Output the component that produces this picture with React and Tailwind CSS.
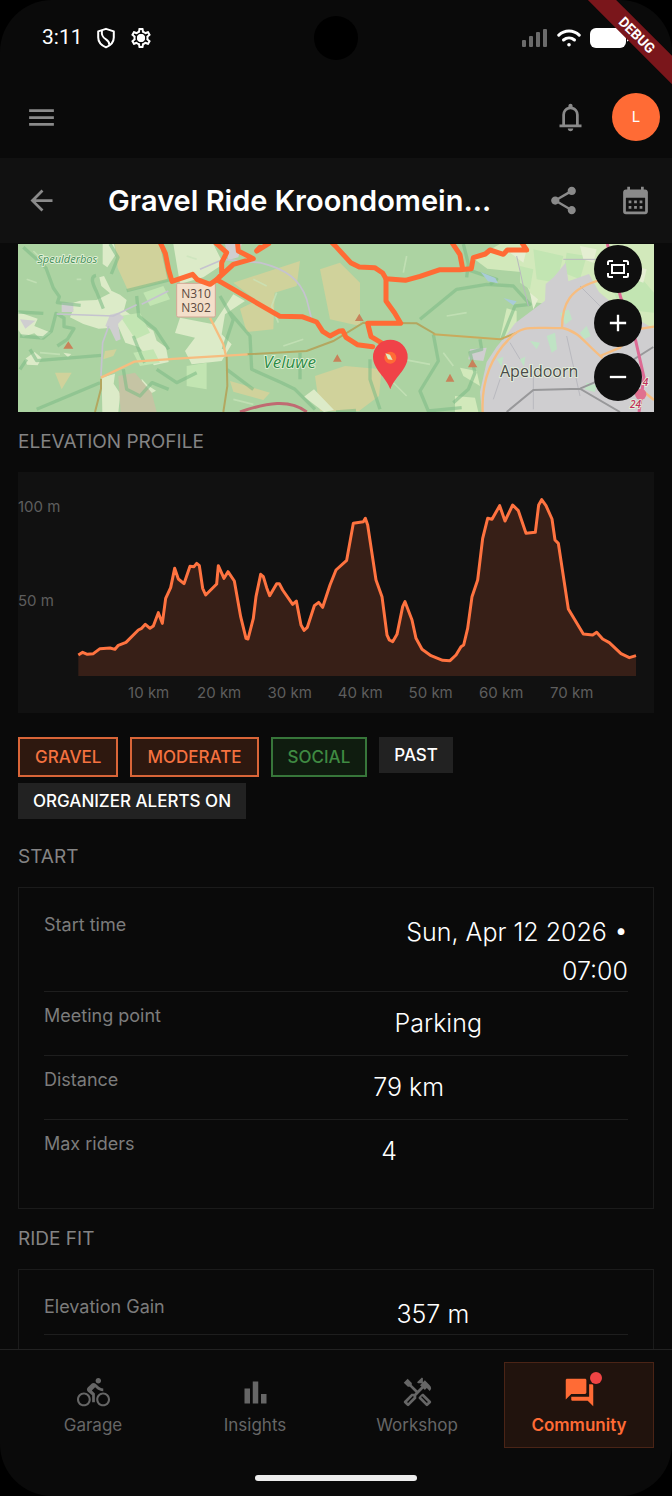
import {
  MdAdd,
  MdArrowBack,
  MdBarChart,
  MdCalendarMonth,
  MdDirectionsBike,
  MdForum,
  MdMenu,
  MdOutlineHandyman,
  MdOutlineSettings,
  MdRemove,
  MdShare,
} from 'react-icons/md';

const PROFILE = [
  [235, 570], [248, 562], [262, 568], [280, 566], [300, 551], [330, 549], [345, 553], [355, 541], [378, 532],
  [415, 495], [425, 490], [436, 478], [450, 490], [460, 483], [475, 443], [487, 475], [497, 400], [512, 368],
  [524, 310], [535, 342], [552, 356], [570, 304], [582, 305], [590, 295], [598, 302], [608, 370], [617, 390],
  [650, 357], [655, 302], [672, 340], [684, 320], [703, 348], [722, 455], [738, 520], [744, 522], [760, 460],
  [768, 395], [782, 328], [790, 335], [800, 368], [809, 392], [830, 356], [838, 356], [848, 375], [878, 418],
  [889, 408], [903, 480], [912, 496], [922, 487], [943, 422], [956, 412], [968, 427], [990, 360], [1008, 315],
  [1040, 286], [1060, 175], [1090, 170], [1096, 160], [1103, 180], [1128, 345], [1146, 395], [1161, 510],
  [1168, 525], [1178, 530], [1191, 508], [1208, 425], [1215, 410], [1236, 465], [1248, 520], [1266, 553],
  [1293, 572], [1328, 586], [1350, 587], [1368, 570], [1383, 545], [1391, 540], [1403, 490], [1416, 395],
  [1433, 345], [1448, 220], [1463, 160], [1476, 163], [1499, 122], [1515, 168], [1538, 120], [1555, 137],
  [1578, 205], [1606, 202], [1616, 120], [1625, 104], [1638, 122], [1656, 162], [1665, 225], [1675, 235],
  [1705, 432], [1750, 507], [1778, 510], [1790, 502], [1808, 522], [1828, 533], [1863, 566], [1888, 578], [1908, 572],
];

const START_ROWS = [
  { label: 'Start time', value: 'Sun, Apr 12 2026 • 07:00' },
  { label: 'Meeting point', value: 'Parking' },
  { label: 'Distance', value: '79 km' },
  { label: 'Max riders', value: '4' },
];

const FIT_ROWS = [{ label: 'Elevation Gain', value: '357 m' }];

const TABS = [
  { label: 'Garage', icon: MdDirectionsBike },
  { label: 'Insights', icon: MdBarChart },
  { label: 'Workshop', icon: MdOutlineHandyman },
  { label: 'Community', icon: MdForum, active: true },
];

const BellIcon = ({ className }) => (
  <svg viewBox="0 0 24 24" className={className} fill="currentColor">
    <path d="M4 19v-2h2v-7q0-2.075 1.250-3.687T10.500 4.200v-.7q0-.625.438-1.062T12 2t1.063.438T13.500 3.500v.7q2 .5 3.250 2.113T18 10v7h2v2zm8 3q-.825 0-1.412-.587T10 20h4q0 .825-.587 1.413T12 22m-4-5h8v-7q0-1.650-1.175-2.825T12 6 9.175 7.175 8 10z" />
  </svg>
);

const FitIcon = ({ className }) => (
  <svg viewBox="0 0 24 20" className={className} fill="none" stroke="currentColor" strokeWidth="2">
    <path d="M2 6V3.500Q2 2 3.500 2H7M17 2h3.500Q22 2 22 3.500V6M22 14v2.500Q22 18 20.500 18H17M7 18H3.500Q2 18 2 16.500V14" />
    <rect x="6" y="6" width="12" height="8" />
  </svg>
);

const StatusBar = () => (
  <div className="relative flex h-19 items-center justify-between px-[42px]">
    <div className="flex items-center gap-3 text-white">
      <span className="font-[Roboto] text-[21px]">3:11</span>
      <svg viewBox="0 0 24 24" className="size-[22px]" fill="none" stroke="currentColor" strokeWidth="2.2" strokeLinejoin="round">
        <path d="M12 2 20.500 4.800v6.700c0 4.700-3.200 8.500-8.500 10.700-5.300-2.200-8.500-6-8.500-10.700V4.800z" />
        <path d="M7.500 4c-.5 5.500 1 7.500 4.500 9.500 2.500 1.500 3.500 3 3.800 6" />
      </svg>
      <div className="relative flex items-center justify-center">
        <MdOutlineSettings className="size-6" />
        <span className="absolute size-2 rounded-full bg-white" />
      </div>
    </div>
    <div className="absolute left-1/2 top-4 size-11 -translate-x-1/2 rounded-full bg-black" />
    <div className="flex items-center gap-[9px]">
      <svg viewBox="0 0 26 18" className="h-[18px] w-[26px]" fill="#6b6b6b">
        <rect x="0" y="11" width="4" height="7" rx="1" />
        <rect x="7" y="7" width="4" height="11" rx="1" />
        <rect x="14" y="3" width="4" height="15" rx="1" />
        <rect x="21" y="0" width="4" height="18" rx="1" />
      </svg>
      <svg viewBox="0 0 24 18" className="h-[18px] w-6" fill="none" stroke="#fff" strokeWidth="3" strokeLinecap="round">
        <path d="M1.800 6.200c5.800-5.600 14.600-5.600 20.400 0" />
        <path d="M6.500 11c3.200-2.800 7.800-2.800 11 0" />
        <circle cx="12" cy="15.800" r="1.800" fill="#fff" stroke="none" />
      </svg>
      <svg viewBox="0 0 40 20" className="h-5 w-10" fill="#fff">
        <rect width="36" height="20" rx="6" />
        <path d="M37 6.500c2 .5 3 1.800 3 3.500s-1 3-3 3.500z" />
      </svg>
    </div>
  </div>
);

const RideMap = () => (
  <div className="relative h-[168px] overflow-hidden">
    <svg viewBox="54 24 1908 504" preserveAspectRatio="xMidYMid slice" className="block h-full w-full" fill="none" aria-hidden="true">
      <rect x="54" y="24" width="1908" height="504" fill="#acd3a2" />
      {/* heath */}
      <g fill="#d0d29b">
        <path d="M345 24h132l38 104-130 38-32-70z" />
        <path d="M700 140 900 75l-10 75-66 20-4 110-80 8-20-70 50-24z" />
        <path d="M960 100l60-20 60 60v130l-90-20z" />
        <path d="M945 420l90-30 110 10-8 80-60 45H960z" />
        <path d="M690 435l120 35-20 22-90-25zM165 410h50l-30 50zM315 345l35-5-10 20-30 10z" />
      </g>
      {/* fields */}
      <g fill="#dcebc8">
        <path d="M298 124l14-4 22 44 26 12 20 16-8 30 34 24 30 24 24 14 10 30 28 20 8 44-44 10-44-54-42-14-20-46-60 4-46-14-40-20 10-24-20-14 40-12 50-2 40-20-26-22z" />
        <path d="M540 245l100 20 60-90 35 20-60 40-10 60 30 30-30 50-90 10-20-40 30-40-60-14z" />
        <path d="M55 228l58 20-10 22 50 20-30 20-20-18-34 10-14-20zM74 370l30-22 21 18-12 22-32-2z" />
        <path d="M305 425l40-12-4 30 20 30-6 55h-48zM425 428l18 20 25 16-14 8-28-10z" />
        <path d="M520 24h120l30 60-60 40-70 20zM308 24h34l6 30-26 40-14-10z" />
        <path d="M912 482l30-22 60 62-30 6zM190 350l24 4-10 10z" />
      </g>
      <g fill="#d2e9bb">
        <path d="M1500 24h462v504h-100l-80-300-180-30-40-90-100-10-40-30z" />
        <path d="M1550 225l-30-8-20 90 50-10zM1365 480l60 5 10 43h-70zM1380 395l50 10 10 45-50-30z" />
      </g>
      <g fill="#c2e5b2">
        <path d="M360 240l60-10 30 60-44 20zM560 390l60-10v80l-60-10zM1600 40l90 20-20 80-60-10zM1830 140l80-30 52 60v60l-100-10zM1700 50l60 10-20 70-50-20z" />
        <path d="M430 170l60-20 20 40-60 20zM400 350l60-10 20 40-60 10zM1560 90l40 10-10 60-30-20zM1830 40l90 20-30 50z" />
      </g>
      <g fill="#e5eed2">
        <path d="M1530 50l50-10-10 40zM1740 30l50 10-10 40-30-10zM1900 90l40 10-10 40-30-10zM1940 270l22 10v40l-22-10zM1590 170l24 20-14 30z" />
      </g>
      <path d="M355 420l50-10 50 60 15 58h-108z" fill="#c5c4a4" />
      {/* towns */}
      <g fill="#cfced0">
        <path d="M1545 262l50-38 40-30 2-50 24-20 36-44 8 56 62-22 30 54 60 50 105 60v250h-516l-6-60 20-90 30-46 30-36z" />
        <path d="M1410 340l50-5-10 40-45-5zM185 200h35v28h-35zM330 236l24-6 18 14-18 20 8 46-14 6-18-38-14-8zM675 24h50l-10 40-30 8zM60 250l46 4-30 24z" />
      </g>
      <g fill="#bfe3c4">
        <path d="M1640 300l25-10 6 50-16 10zM1680 232l26-12 10 30-20 16zM1740 290l20-20 12 30-20 10zM1590 315l30 5-10 20zM1490 370l20-8-5 30zM1760 440l30 8-6 20-30-8zM1560 370l16-8-4 30z" />
      </g>
      {/* forest edges */}
      <g stroke="#7fbd87" strokeWidth="10" strokeLinejoin="round" strokeOpacity=".6">
        <path d="M70 34l40 36 28 26 22 60 18 26-6 18 70 8M330 24l24 40-20 50M380 164l128-32-20-90M288 118c-20 4-8 30 2 50l20 50M410 180l6 60 50 40 40 60" />
        <path d="M55 228l75 4M60 300l70 6 24-20 14-54 24 14 0 26 30 6-20 32-30 20M90 340l20 34 194-16M60 400l20-30M110 520l190-80M400 300l24 60 10 20" />
        <path d="M660 180l40 70-30 90M690 230l60 70 5 100 90 40 40 20 60 60M370 400l10 60 40 20 36-40 50 20M470 400l60 40 60-30M900 350v80M680 400l80 60" />
        <path d="M1260 250l110-90 90-15 80 5 50 55-45 5-20 50-20 50M1300 295l15 80-55 90 25 60 100-10M1440 310l5 30-35 10 15 60-20 50-45 40" />
        <path d="M1110 370v60l30 90M1008 528l60-5M1390 24l15 60-5 40M1400 100l90 30-20 15" />
      </g>
      <g stroke="#c9e4bb" strokeWidth="5" strokeOpacity=".7">
        <path d="M100 45l20 20M230 130h14M80 130l30 10M560 60l30 10M830 170l-15 40 20 50M850 330l60-20M1220 60l-10 50M1340 240l60-10M1210 370l80 15M1330 350l30 40M1160 420l60 60M760 130l40 20M700 490l60 15M120 350l60 5" />
      </g>
      <g stroke="#c5c3cf" strokeWidth="5">
        <path d="M170 234l170 6 70-34M425 205l80-40M600 100l70-30 110 10c80 20 120 50 140 110l15 60M326 270l-18 50-5 100" />
        <path d="M1550 60l20 90 15 60M1690 70h120M1530 320l30 50M1600 420v100M1700 300l40 180M1500 430l-20 60M1740 150l60 60" stroke="#b9b9bf" strokeWidth="3" />
      </g>
      <path d="M1442 108l44 18 8 16-30-6zM1510 186l40 10-10 12z" fill="#a9cbd8" />
      {/* secondary roads */}
      <g stroke="#b3a760" strokeWidth="6">
        <path d="M285 528l18-70v-30M680 360l2 90-12 78M740 355l180-10 80-30 90-55 160 2 55 32" />
        <path d="M1300 295l200 15 50-20" stroke="#c9aa5c" />
      </g>
      <g stroke="#f6bd80" strokeWidth="7">
        <path d="M303 425l100-48 140-10 200-12M630 245l40 80 8 35" />
        <path d="M1448 528c-4-90 20-160 80-220 40-44 70-30 160-32 50 10 70 50 120 90M1686 276c0-70 20-120 120-145M1800 360l60-25 50-55 52-8M1925 462l37 30" />
      </g>
      <path d="M720 528c80-28 150-40 200 0" stroke="#c06a72" strokeWidth="9" />
      <path d="M1520 528l80-66 140-4 120 70M1740 458l70-30 150-95" stroke="#98989a" strokeWidth="6" />
      <path d="M1822 24l40 160 45 130 25 110-15 104" stroke="#dd6a94" strokeWidth="9" />
      <circle cx="1922" cy="475" r="17" fill="#e0708f" />

      <g fill="#c8825a">
        <path d="M205 316l15 22h-30zM1078 233l13 22h-26zM1012 355l13 22h-26zM1350 413l13 24h-26zM1417 370l15 24h-28z" />
      </g>

      <g fontFamily="'Open Sans', 'Noto Sans', sans-serif" stroke="#e6f2dc" strokeWidth="5" paintOrder="stroke">
        <text x="112" y="80" fontSize="33" fontWeight="500" fontStyle="italic" fill="#3f8e55">Speulderbos</text>
        <text x="790" y="396" fontSize="51" fontWeight="500" fontStyle="italic" fill="#2d8c46">Veluwe</text>
        <text x="1500" y="423" fontSize="48" fontWeight="500" fill="#4a4a4a">Apeldoorn</text>
        <text x="1890" y="516" fontSize="30" fontWeight="600" fontStyle="italic" fill="#c0305c">24</text>
        <text x="1928" y="450" fontSize="30" fontWeight="600" fontStyle="italic" fill="#c0305c">4</text>
      </g>
      <rect x="530" y="142" width="116" height="101" rx="4" fill="#f3dfca" stroke="#d3a795" strokeWidth="3" />
      <g fontFamily="'Open Sans', 'Noto Sans', sans-serif" fontSize="36" fontWeight="500" fill="#5c4a40" textAnchor="middle">
        <text x="588" y="186">N310</text>
        <text x="588" y="229">N302</text>
      </g>

      {/* planned route */}
      <g stroke="#ff6b35" strokeWidth="15" strokeLinejoin="round" strokeLinecap="round">
        <path d="M478 14l18 38 10 50 10 34 62-21 14 16 38 14 20-14 190 110 66 1 44 16 18 28 22 14 26-14 12-2 10 20 34 22 46 6" />
        <path d="M640 14l40 36-15 30v35l-15 16 50-46 60-17-45-23-3-31M770 45l36-22M780 34l-10 10" />
        <path d="M990 14l20 20 42 46 26 13 46 2 24 16 10 17 58 5 44-12 60-20h60l34-3 6-33 36-11 14-12 40 13 12-13h58l-16-24" />
        <path d="M1352 14l28 42 8 42M1158 128v67l26 36 18 31h-99l10 40 34 20" />
      </g>
      <path d="M1171 460c-12-36-52-60-52-97a52 52 0 0 1 104 0c0 37-40 61-52 97z" fill="#f04248" />
      <circle cx="1171" cy="365" r="18" fill="#ff6b35" />
      <path d="M1156 352l14 4 8 16-14-2z" fill="#dcebc3" />
    </svg>
    <div className="absolute right-3 top-px flex flex-col gap-1.5 text-white">
      <button aria-label="Fit route" className="flex size-12 items-center justify-center rounded-full bg-[#0f0f0f]">
        <FitIcon className="h-5 w-6" />
      </button>
      <button aria-label="Zoom in" className="flex size-12 items-center justify-center rounded-full bg-[#0f0f0f]">
        <MdAdd className="size-7" />
      </button>
      <button aria-label="Zoom out" className="flex size-12 items-center justify-center rounded-full bg-[#0f0f0f]">
        <MdRemove className="size-7" />
      </button>
    </div>
  </div>
);

const ElevationChart = () => {
  const line = PROFILE.map(([x, y]) => `${x},${y}`).join(' ');
  return (
    <div className="bg-[#111111]">
      <svg viewBox="54 21 1908 723" className="block w-full" role="img" aria-label="Elevation profile">
        <polygon points={`235,633 ${line} 1908,633`} fill="#ff6b35" fillOpacity=".16" />
        <polyline points={line} fill="none" stroke="#ff7340" strokeWidth="9" strokeLinejoin="round" />
        <g fill="#5e5e5e" fontSize="45">
          <text x="54" y="140">100 m</text>
          <text x="54" y="422">50 m</text>
          <g textAnchor="middle">
            {[10, 20, 30, 40, 50, 60, 70].map((km, i) => (
              <text key={km} x={446 + i * 211.500} y="698">{km} km</text>
            ))}
          </g>
        </g>
      </svg>
    </div>
  );
};

const SectionTitle = ({ children }) => (
  <h2 className="text-[19px] leading-7 text-[#848484]">{children}</h2>
);

const InfoCard = ({ rows }) => (
  <dl className="border border-[#1b1b1b] p-[25px]">
    {rows.map((row) => (
      <div
        key={row.label}
        className="flex items-start border-b border-[#1e1e1e] py-3 first:pt-0 first:pb-0 last:not-first:border-b-0"
      >
        <dt className="text-lg leading-6 text-[#7c7c7c]">{row.label}</dt>
        <span className="flex-1" />
        <dd className="flex-1">
          <span className="inline-block text-right align-top text-[25px] leading-[39px] font-light text-white">{row.value}</span>
        </dd>
      </div>
    ))}
  </dl>
);

const App = () => (
  <div className="h-screen bg-black font-[Inter,sans-serif]">
    <div className="relative flex h-full flex-col overflow-hidden rounded-[52px] bg-[#0a0a0a]">
      <StatusBar />

      <header className="flex h-[82px] items-center justify-between pr-3 pl-[25px] text-[#8a8a8a]">
        <button aria-label="Menu">
          <MdMenu className="size-[33px]" />
        </button>
        <div className="flex items-center gap-[25px]">
          <button aria-label="Notifications">
            <BellIcon className="size-[33px]" />
          </button>
          <button className="size-12 rounded-full bg-[#ff6b35] text-[15px] text-white">L</button>
        </div>
      </header>

      <div className="flex h-[85px] items-center bg-[#111111] pr-5 pl-[25px] text-[#8a8a8a]">
        <button aria-label="Back">
          <MdArrowBack className="size-[33px]" />
        </button>
        <h1 className="ml-[50px] flex-1 text-[29px] font-semibold text-white">Gravel Ride Kroondomein…</h1>
        <div className="flex gap-[39px]">
          <button aria-label="Share">
            <MdShare className="size-[33px]" />
          </button>
          <button aria-label="Add to calendar">
            <MdCalendarMonth className="size-[33px]" />
          </button>
        </div>
      </div>

      <main className="min-h-0 flex-1 overflow-hidden px-4.5 pt-px">
        <RideMap />

        <div className="mt-4 mb-4">
          <SectionTitle>ELEVATION PROFILE</SectionTitle>
        </div>
        <ElevationChart />

        <div className="mt-6 flex flex-wrap items-start gap-x-3 gap-y-1.5 text-[17px] leading-9 font-medium">
          <span className="border-2 border-[#d96538] bg-[#2e180f] px-[15px] text-[#f57240]">GRAVEL</span>
          <span className="border-2 border-[#d96538] bg-[#2e180f] px-[15px] text-[#f57240]">MODERATE</span>
          <span className="border-2 border-[#37763a] bg-[#0f1c0f] px-[15px] text-[#3f8a42]">SOCIAL</span>
          <span className="bg-[#222222] px-[15px] text-white">PAST</span>
          <span className="bg-[#222222] px-[15px] text-white">ORGANIZER ALERTS ON</span>
        </div>

        <div className="mt-6 mb-4">
          <SectionTitle>START</SectionTitle>
        </div>
        <InfoCard rows={START_ROWS} />

        <div className="mt-4 mb-4">
          <SectionTitle>RIDE FIT</SectionTitle>
        </div>
        <InfoCard rows={FIT_ROWS} />
      </main>

      <nav className="border-t border-[#222222] px-4.5 pt-3">
        <div className="grid grid-cols-4 gap-3">
          {TABS.map(({ label, icon: Icon, active }) => (
            <a
              key={label}
              href="#"
              className={`flex h-[86px] flex-col items-center justify-center border pt-1.5 text-[17px] ${
                active
                  ? 'border-[#4a2416] bg-[#21130d] font-semibold text-[#ff6b35]'
                  : 'border-transparent text-[#666666]'
              }`}
            >
              <span className="relative">
                <Icon className="size-[33px]" />
                {active && <span className="absolute -right-1.5 -top-1 size-3 rounded-full bg-[#ef4444]" />}
              </span>
              <span className="leading-8">{label}</span>
            </a>
          ))}
        </div>
        <div className="mx-auto mt-[27px] mb-[15px] h-1.5 w-[162px] rounded-full bg-[#ededed]" />
      </nav>

      <div className="absolute -right-[45px] top-[25px] w-40 rotate-45 bg-[#7a161b] text-center font-[Roboto] text-sm leading-5 font-bold text-white">
        DEBUG
      </div>
    </div>
  </div>
);

export default App;
